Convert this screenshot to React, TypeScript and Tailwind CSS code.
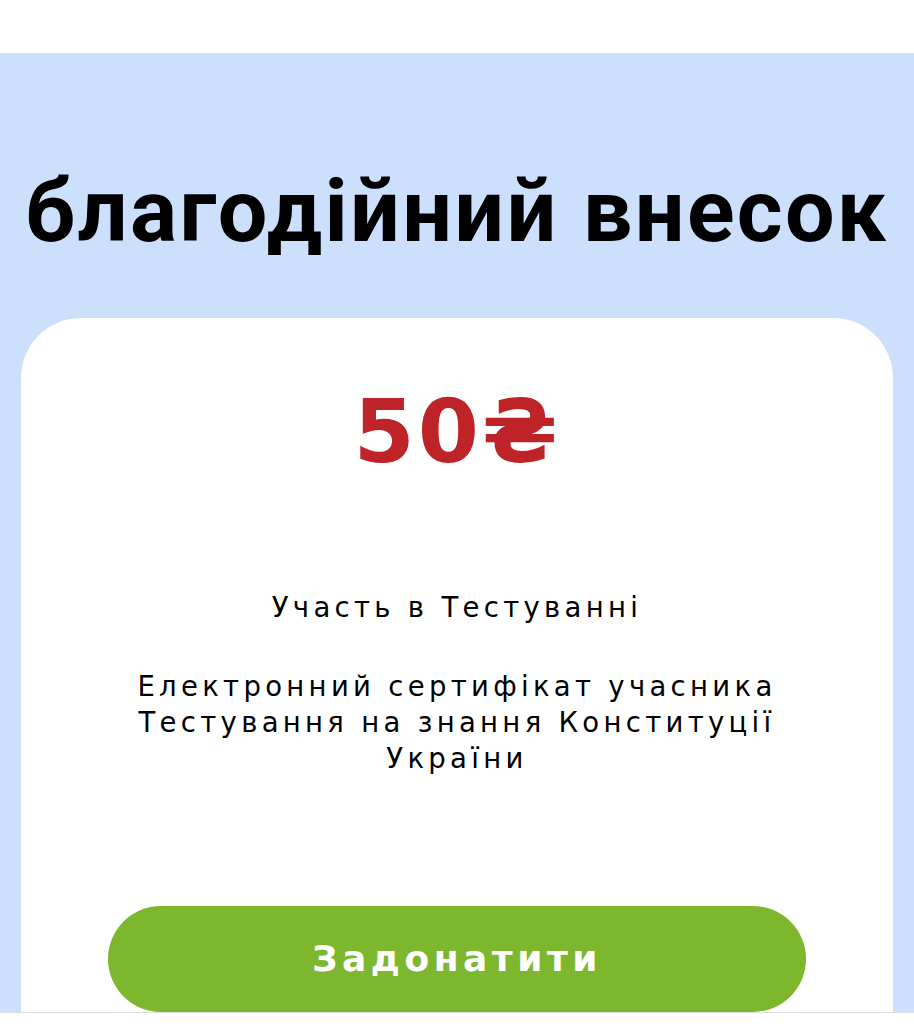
import React from 'react';

const DonationCard: React.FC = () => {
  return (
    <div className="mx-[21px] w-[872px] rounded-t-[60px] bg-white pt-[70px] pb-[120px] flex flex-col items-center">
      <div className="text-[88px] leading-none font-bold text-[#be2327] tracking-[3px] font-['DejaVu_Sans',sans-serif]">
        50₴
      </div>
      <div className="mt-[113px] text-center text-[27.5px] leading-[36px] text-black tracking-[4.3px] font-['DejaVu_Sans',sans-serif]">
        <p>Участь в Тестуванні</p>
        <p className="mt-[43px]">
          Електронний сертифікат учасника
          <br />
          Тестування на знання Конституції
          <br />
          України
        </p>
      </div>
      <button className="mt-[130px] w-[698px] h-[106px] rounded-full bg-[#7cb72d] text-white text-[36px] font-bold tracking-[4.5px] font-['DejaVu_Sans',sans-serif]">
        Задонатити
      </button>
    </div>
  );
};

const App: React.FC = () => {
  return (
    <div className="bg-white">
      <div className="h-[1013px] overflow-hidden border-b border-[#dedede]">
        <div className="h-[53px] bg-white" />
        <section className="bg-[#cce0fe] pt-[114px] min-h-[960px]">
          <h1 className="text-center text-[88px] leading-none font-bold text-black tracking-[2.3px] font-['Roboto',sans-serif]">
            благодійний внесок
          </h1>
          <div className="mt-[63px]">
            <DonationCard />
          </div>
        </section>
      </div>
      <div className="h-[11px] bg-white" />
    </div>
  );
};

export default App;
